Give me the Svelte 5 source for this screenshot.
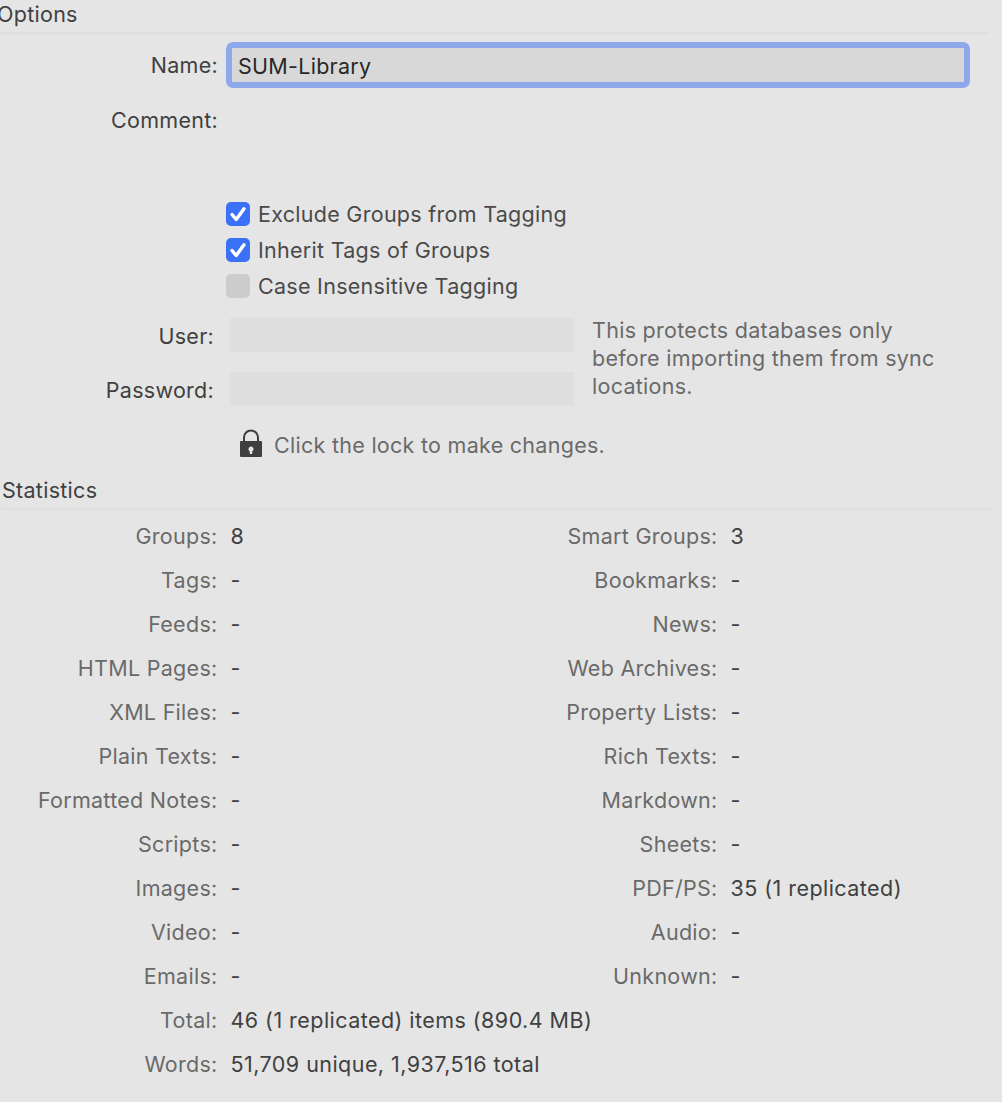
<script>
    const checks = [
        { label: "Exclude Groups from Tagging", on: true },
        { label: "Inherit Tags of Groups", on: true },
        { label: "Case Insensitive Tagging", on: false },
    ];
    const stats = [
        ["Groups:", "8", "Smart Groups:", "3"],
        ["Tags:", "-", "Bookmarks:", "-"],
        ["Feeds:", "-", "News:", "-"],
        ["HTML Pages:", "-", "Web Archives:", "-"],
        ["XML Files:", "-", "Property Lists:", "-"],
        ["Plain Texts:", "-", "Rich Texts:", "-"],
        ["Formatted Notes:", "-", "Markdown:", "-"],
        ["Scripts:", "-", "Sheets:", "-"],
        ["Images:", "-", "PDF/PS:", "35 (1 replicated)"],
        ["Video:", "-", "Audio:", "-"],
        ["Emails:", "-", "Unknown:", "-"],
    ];
</script>

<main>
    <h2 class="options">Options</h2>
    <div class="form">
        <div class="row name">
            <span class="label">Name:</span>
            <input type="text" value="SUM-Library" />
        </div>
        <div class="row comment">
            <span class="label">Comment:</span>
        </div>
        <div class="checks">
            {#each checks as { label, on }}
                <div class="check">
                    <span class="box" class:on>
                        {#if on}
                            <svg viewBox="0 0 24 24" width="24" height="24">
                                <path d="M6 12.5 L10.2 17.5 L18 6.8" fill="none" stroke="#fff" stroke-width="3.4" stroke-linecap="round" stroke-linejoin="round" />
                            </svg>
                        {/if}
                    </span>
                    <span>{label}</span>
                </div>
            {/each}
        </div>
        <div class="auth">
            <div class="creds">
                <div class="cred">
                    <span class="label">User:</span>
                    <span class="field"></span>
                </div>
                <div class="cred">
                    <span class="label">Password:</span>
                    <span class="field"></span>
                </div>
            </div>
            <p class="hint">This protects databases only before importing them from sync locations.</p>
        </div>
        <div class="lock">
            <svg viewBox="0 0 22 28" width="22" height="28">
                <path d="M4 13 V8.5 a7 7 0 0 1 14 0 V13" fill="none" stroke="#3f3f3f" stroke-width="2" />
                <path d="M1 12 H21 a1 1 0 0 1 1 1 V27 a1 1 0 0 1 -1 1 H1 a1 1 0 0 1 -1 -1 V13 a1 1 0 0 1 1 -1 Z M11 17.5 a2.5 2.5 0 0 0 -1.2 4.7 V25 H12.2 V22.2 A2.5 2.5 0 0 0 11 17.5 Z" fill="#3f3f3f" fill-rule="evenodd" />
            </svg>
            <span>Click the lock to make changes.</span>
        </div>
    </div>

    <h2 class="statistics">Statistics</h2>
    <div class="stats">
        {#each stats as [a, av, b, bv]}
            <span class="label">{a}</span>
            <span class="value">{av}</span>
            <span class="label">{b}</span>
            <span class="value">{bv}</span>
        {/each}
        <span class="label">Total:</span>
        <span class="value wide">46 (1 replicated) items (890.4 MB)</span>
        <span class="label">Words:</span>
        <span class="value wide">51,709 unique, 1,937,516 total</span>
    </div>
</main>

<style>
    :global(body) {
        background: #e5e5e5;
        overflow: hidden;
    }
    main {
        width: 1002px;
        height: 1102px;
        overflow: hidden;
        box-sizing: border-box;
        font-family: Inter, "Liberation Sans", sans-serif;
        font-size: 21.5px;
        letter-spacing: 0.28px;
        line-height: 28px;
        color: #6a6a6a;
        background: #e5e5e5;
    }
    h2 {
        margin: 0;
        font-size: 21.5px;
        font-weight: 400;
        line-height: 28px;
        color: #404040;
        border-bottom: 2px solid #dfdfdf;
    }
    .options {
        margin-left: -3px;
        margin-right: 14px;
        height: 32px;
    }
    .statistics {
        margin-top: 13px;
        margin-left: 2px;
        margin-right: 8px;
        height: 32px;
        padding-top: 3px;
    }
    .form {
        color: #404040;
    }
    .row {
        display: flex;
        align-items: center;
        column-gap: 8px;
    }
    .row .label {
        width: 218px;
        text-align: right;
        flex: none;
    }
    .name {
        margin-top: 8px;
        height: 46px;
    }
    .name .label {
        margin-bottom: 1px;
    }
    input {
        width: 744px;
        height: 46px;
        box-sizing: border-box;
        flex: none;
        margin: 0;
        padding: 2px 0 0 6px;
        border: 6.5px solid #8ea8ea;
        border-radius: 7px;
        background: #d8d8d8;
        outline: none;
        font: inherit;
        letter-spacing: inherit;
        color: #282828;
    }
    .comment {
        margin-top: 18px;
    }
    .checks {
        margin: 66px 0 0 226px;
        display: flex;
        flex-direction: column;
        row-gap: 8px;
    }
    .check {
        display: flex;
        align-items: center;
        column-gap: 8px;
        height: 28px;
        color: #4a4a4a;
    }
    .box {
        width: 24px;
        height: 24px;
        border-radius: 5px;
        background: #cccccc;
        flex: none;
    }
    .box.on {
        background: #3b71f6;
    }
    .box svg {
        display: block;
    }
    .auth {
        display: flex;
        margin-top: 18px;
    }
    .creds {
        display: flex;
        flex-direction: column;
        row-gap: 20px;
        flex: none;
    }
    .cred {
        display: flex;
        align-items: center;
        column-gap: 16px;
        height: 34px;
    }
    .cred .label {
        width: 214px;
        text-align: right;
        padding-top: 2px;
    }
    .field {
        width: 344px;
        height: 34px;
        background: #dfdfdf;
    }
    .hint {
        margin: -2px 0 0 18px;
        width: 360px;
        color: #6a6a6a;
    }
    .lock {
        display: flex;
        align-items: center;
        column-gap: 12px;
        margin: 24px 0 0 240px;
        height: 30px;
        color: #6a6a6a;
    }
    .lock svg {
        margin-bottom: 4px;
    }
    .stats {
        display: grid;
        grid-template-columns: 217.5px 250px 250px 1fr;
        grid-auto-rows: 44px;
        margin-top: 4px;
        align-items: center;
    }
    .stats .label {
        text-align: right;
        white-space: nowrap;
    }
    .stats .value {
        padding-left: 13px;
        letter-spacing: 0.45px;
        color: #404040;
        white-space: nowrap;
    }
    .stats .wide {
        grid-column: 2 / 5;
    }
</style>
